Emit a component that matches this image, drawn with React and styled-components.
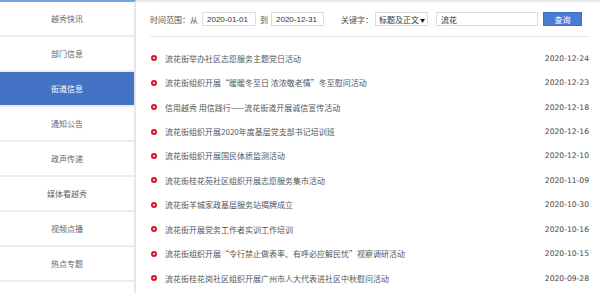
import styled, { createGlobalStyle } from 'styled-components';

const GlobalStyle = createGlobalStyle`
  html, body {
    margin: 0;
    padding: 0;
    background: #fff;
  }
  body {
    font-family: "Liberation Sans", "Noto Sans CJK SC", sans-serif;
  }
`;

const menu = ['越秀快讯', '部门信息', '街道信息', '通知公告', '政声传递', '媒体看越秀', '视频点播', '热点专题'];

const news = [
  ['流花街举办社区志愿服务主题党日活动', '2020-12-24'],
  ['流花街组织开展“暖暖冬至日 浓浓敬老情”冬至慰问活动', '2020-12-23'],
  ['信用越秀 用信践行——流花街道开展诚信宣传活动', '2020-12-18'],
  ['流花街组织开展2020年度基层党支部书记培训班', '2020-12-16'],
  ['流花街组织开展国民体质监测活动', '2020-12-10'],
  ['流花街桂花苑社区组织开展志愿服务集市活动', '2020-11-09'],
  ['流花街羊城家政基层服务站揭牌成立', '2020-10-30'],
  ['流花街开展党务工作者实训工作培训', '2020-10-16'],
  ['流花街组织开展“令行禁止做表率、有呼必应解民忧”视察调研活动', '2020-10-15'],
  ['流花街桂花岗社区组织开展广州市人大代表进社区中秋慰问活动', '2020-09-28'],
];

const Page = styled.div`
  display: flex;
  height: 293px;
  overflow: hidden;
`;

const Sidebar = styled.nav`
  width: 134px;
  flex-shrink: 0;
  border-top: 2px solid #6fa3dc;
  border-right: 2px solid #e6e6e6;
`;

const MenuItem = styled.div`
  height: 33px;
  border-bottom: 2px solid #ececec;
  display: flex;
  align-items: center;
  justify-content: center;
  font-family: "Noto Sans CJK SC", sans-serif;
  font-size: 8px;
  color: ${(p) => (p.$active ? '#fff' : '#666')};
  background: ${(p) => (p.$active ? '#4472c4' : '#fff')};
`;

const Main = styled.main`
  flex: 1;
  border-top: 2px solid #e6eaee;
  padding: 0 11px 0 14px;
`;

const SearchBar = styled.form`
  height: 34px;
  display: flex;
  align-items: center;
  border-bottom: 1px solid #e6e6e6;
  font-family: "Noto Sans CJK SC", sans-serif;
  font-size: 8px;
  color: #555;
`;

const Label = styled.span`
  margin-left: ${(p) => p.$gap || 0}px;
  white-space: nowrap;
`;

const Field = styled.input`
  box-sizing: border-box;
  height: 14px;
  width: ${(p) => p.$w}px;
  margin-left: ${(p) => p.$gap}px;
  padding: 0 4px;
  border: 1px solid #dcdcdc;
  background: #fff;
  font-family: "Liberation Sans", "Noto Sans CJK SC", sans-serif;
  font-size: 8px;
  color: #333;
  outline: none;
`;

const Select = styled.div`
  box-sizing: border-box;
  height: 14px;
  width: 53px;
  margin-left: 2px;
  padding: 0 2px 0 3px;
  border: 1px solid #dcdcdc;
  display: flex;
  align-items: center;
  justify-content: space-between;
  color: #333;
  white-space: nowrap;
`;

const Caret = styled.span`
  font-size: 5px;
  color: #111;
`;

const Button = styled.button`
  box-sizing: border-box;
  height: 14px;
  width: 39px;
  margin-left: 5px;
  padding: 0;
  border: 1px solid #3f6fc4;
  background: #4a7bd2;
  color: #fff;
  font-family: "Noto Sans CJK SC", sans-serif;
  font-size: 8px;
`;

const List = styled.ul`
  list-style: none;
  margin: 0;
  padding: 9px 0 0;
`;

const Row = styled.li`
  height: 24.44px;
  display: flex;
  align-items: center;
`;

const Dot = styled.span`
  box-sizing: border-box;
  width: 6px;
  height: 6px;
  margin: 0 8px 0 1px;
  border-radius: 50%;
  border: 2px solid #d3142a;
  flex-shrink: 0;
`;

const Title = styled.span`
  flex: 1;
  font-family: "Noto Sans CJK SC", sans-serif;
  font-size: 8px;
  color: #555;
  white-space: nowrap;
  overflow: hidden;
`;

const DateText = styled.span`
  font-family: "DejaVu Sans", sans-serif;
  font-size: 7.6px;
  color: #444;
`;

export default function App() {
  return (
    <>
      <GlobalStyle />
      <Page>
        <Sidebar>
          {menu.map((m) => (
            <MenuItem key={m} $active={m === '街道信息'}>{m}</MenuItem>
          ))}
        </Sidebar>
        <Main>
          <SearchBar onSubmit={(e) => e.preventDefault()}>
            <Label>时间范围：从</Label>
            <Field $w={54} $gap={4} defaultValue="2020-01-01" />
            <Label $gap={4}>到</Label>
            <Field $w={53} $gap={3} defaultValue="2020-12-31" />
            <Label $gap={17}>关键字：</Label>
            <Select>
              标题及正文
              <Caret>▼</Caret>
            </Select>
            <Field $w={102} $gap={8} defaultValue="流花" />
            <Button type="submit">查询</Button>
          </SearchBar>
          <List>
            {news.map(([t, d]) => (
              <Row key={t}>
                <Dot />
                <Title>{t}</Title>
                <DateText>{d}</DateText>
              </Row>
            ))}
          </List>
        </Main>
      </Page>
    </>
  );
}
